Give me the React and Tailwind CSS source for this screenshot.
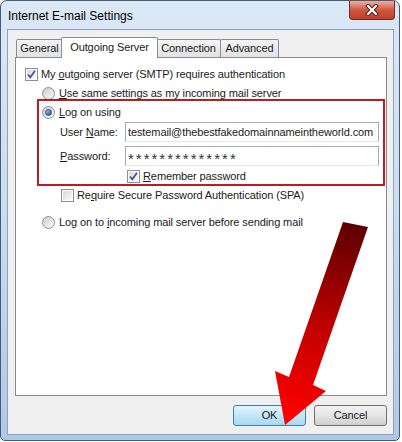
import React from 'react';

function Check({ checked }) {
  return (
    <span className="w-[13px] h-[13px] shrink-0 border border-[#8e8f8f] bg-white p-[1px] flex">
      <span className="flex-1 relative bg-gradient-to-br from-[#d5d9de] to-[#fafafa]">
        {checked && (
          <svg className="absolute -left-[1px] -top-[1px]" width="11" height="11" viewBox="0 0 11 11">
            <path d="M2 5.5 L4.3 8.3 L9 1.8" fill="none" stroke="#3c5596" strokeWidth="1.7" />
          </svg>
        )}
      </span>
    </span>
  );
}

function Radio({ checked }) {
  return (
    <span className="w-[13px] h-[13px] shrink-0 rounded-full border border-[#8e8f8f] bg-gradient-to-br from-[#c9cdd2] to-[#fbfbfb] flex items-center justify-center">
      {checked && <span className="w-[7px] h-[7px] rounded-full bg-gradient-to-br from-[#9dd0f3] to-[#17528a] border border-[#1c4f7c]" />}
    </span>
  );
}

function Tab({ label, active, w }) {
  if (active) {
    return (
      <div className={`${w} h-[21px] -mb-px -ml-[2px] -mr-[1px] z-10 bg-white border border-b-0 border-[#898c95] rounded-t-[2px] flex items-center justify-center pb-[2px]`}>
        {label}
      </div>
    );
  }
  return (
    <div className={`${w} h-[18px] -ml-px first:ml-0 bg-gradient-to-b from-[#f4f4f4] to-[#e2e2e2] border border-b-0 border-[#898c95] rounded-t-[2px] flex items-center justify-center`}>
      {label}
    </div>
  );
}

function Button({ children, primary }) {
  return (
    <div className={`w-[73px] h-[21px] rounded-[3px] border flex items-center justify-center ${primary ? 'border-[#3c7fb1] bg-gradient-to-b from-[#e5f4fc] via-[#c4e5f6] to-[#a8d8f3]' : 'border-[#707070] bg-gradient-to-b from-[#f2f2f2] via-[#e4e4e4] to-[#d0d0d0]'}`}>
      {children}
    </div>
  );
}

export default function App() {
  return (
    <div className="relative w-[402px] h-[442px] bg-white font-['Liberation_Sans',Arial,sans-serif] text-[11px] tracking-[-0.1px] leading-none text-[#1a1a1a]">
      <div className="relative w-[400px] h-[441px] rounded-t-[7px] rounded-b-[5px] border border-[#4a5a70] bg-gradient-to-b from-[#dbe8f6] via-[#c9dcf1] to-[#aec9e8] flex flex-col">
        {/* title bar */}
        <div className="h-[28px] flex items-center pl-[7px] pt-[1px] text-[12px] tracking-normal text-black">Internet E-mail Settings</div>
        <div className="absolute top-0 right-[4px] w-[46px] h-[19px] rounded-b-[4px] border border-t-0 border-[#7a2c22] bg-gradient-to-b from-[#eab0a4] via-[#d0553f] to-[#c23f2a] flex items-center justify-center">
          <svg width="14" height="12" viewBox="0 0 14 12">
            <path d="M3 2 L11 10 M11 2 L3 10" stroke="#4b1a14" strokeWidth="4" strokeLinecap="square" />
            <path d="M3 2 L11 10 M11 2 L3 10" stroke="#ffffff" strokeWidth="2.2" strokeLinecap="square" />
          </svg>
        </div>

        {/* client area */}
        <div className="ml-[6px] w-[387px] h-[406px] border border-[#8ea3bf] bg-[#f0f0f0] flex flex-col">
          {/* tabs */}
          <div className="mt-[7px] ml-[8px] h-[20px] flex items-end">
            <Tab label="General" w="w-[47px]" />
            <Tab label="Outgoing Server" w="w-[97px]" active />
            <Tab label="Connection" w="w-[65px]" />
            <Tab label="Advanced" w="w-[59px]" />
          </div>

          {/* panel */}
          <div className="ml-[7px] w-[372px] h-[339px] border border-[#898c95] bg-white flex flex-col">
            <div className="mt-[9px] h-[14px] pl-[9px] flex items-center gap-[3px]">
              <Check checked />
              <span>My <u>o</u>utgoing server (SMTP) requires authentication</span>
            </div>
            <div className="mt-[6px] h-[12px] pl-[26px] flex items-center gap-[4px]">
              <Radio />
              <span><u>U</u>se same settings as my incoming mail server</span>
            </div>

            <div className="ml-[21px] mr-[1px] border-2 border-[#bd1b22] flex flex-col pb-[1px]">
              <div className="mt-[4px] h-[14px] pl-[3px] flex items-center gap-[4px]">
                <Radio checked />
                <span><u>L</u>og on using</span>
              </div>
              <div className="mt-[3px] h-[20px] pl-[21px] pr-[4px] flex items-center">
                <span className="w-[65px] shrink-0">User <u>N</u>ame:</span>
                <div className="flex-1 h-[20px] border border-[#abadb3] border-b-[#e3e9ef] flex items-center pl-[2px] whitespace-nowrap">
                  testemail@thebestfakedomainnameintheworld.com
                </div>
              </div>
              <div className="mt-[4px] h-[20px] pl-[21px] pr-[4px] flex items-center">
                <span className="w-[65px] shrink-0"><u>P</u>assword:</span>
                <div className="flex-1 h-[20px] border border-[#abadb3] border-b-[#e3e9ef] flex items-center pl-[2px] pt-[5px] text-[15px] tracking-[2px] text-[#333]">
                  **************
                </div>
              </div>
              <div className="mt-[3px] h-[14px] pl-[88px] flex items-center gap-[3px]">
                <Check checked />
                <span><u>R</u>emember password</span>
              </div>
            </div>

            <div className="mt-[2px] h-[14px] pl-[45px] flex items-center gap-[3px]">
              <Check />
              <span>Re<u>q</u>uire Secure Password Authentication (SPA)</span>
            </div>
            <div className="mt-[13px] h-[14px] pl-[26px] flex items-center gap-[4px]">
              <Radio />
              <span>Log on to <u>i</u>ncoming mail server before sending mail</span>
            </div>
          </div>

          {/* buttons */}
          <div className="mt-[9px] pr-[6px] flex justify-end gap-[8px]">
            <Button primary>OK</Button>
            <Button>Cancel</Button>
          </div>
        </div>
      </div>

      {/* annotation arrow */}
      <svg className="absolute inset-0 pointer-events-none" width="402" height="442" viewBox="0 0 402 442">
        <defs>
          <linearGradient id="arr" x1="355" y1="222" x2="290" y2="420" gradientUnits="userSpaceOnUse">
            <stop offset="0" stopColor="#5a0000" />
            <stop offset="0.55" stopColor="#c40000" />
            <stop offset="1" stopColor="#ff0000" />
          </linearGradient>
        </defs>
        <polygon points="343,222 368,227 313,385 326,391 285,425 275,371 289,377" fill="url(#arr)" />
      </svg>
    </div>
  );
}
